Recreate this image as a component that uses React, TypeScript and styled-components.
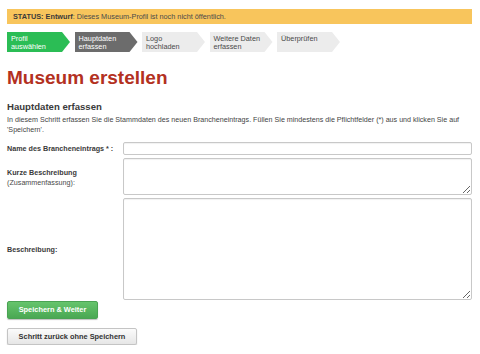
import React from "react";
import styled, { createGlobalStyle } from "styled-components";

const GlobalStyle = createGlobalStyle`
  html, body {
    margin: 0;
    padding: 0;
    background: #ffffff;
  }
  body {
    font-family: "Liberation Sans", Arial, sans-serif;
    color: #333333;
  }
`;

type StepState = "done" | "active" | "todo";

interface Step {
  label: string[];
  state: StepState;
}

const steps: Step[] = [
  { label: ["Profil", "auswählen"], state: "done" },
  { label: ["Hauptdaten", "erfassen"], state: "active" },
  { label: ["Logo", "hochladen"], state: "todo" },
  { label: ["Weitere Daten", "erfassen"], state: "todo" },
  { label: ["Überprüfen"], state: "todo" },
];

export default function App() {
  return (
    <Page>
      <GlobalStyle />
      <StatusBar>
        <strong>STATUS: Entwurf</strong>: Dieses Museum-Profil ist noch nicht öffentlich.
      </StatusBar>

      <Steps>
        {steps.map((step, index) => (
          <StepItem key={index} $state={step.state}>
            {step.label.map((line, i) => (
              <span key={i}>{line}</span>
            ))}
          </StepItem>
        ))}
      </Steps>

      <Title>Museum erstellen</Title>
      <SubTitle>Hauptdaten erfassen</SubTitle>
      <Intro>
        In diesem Schritt erfassen Sie die Stammdaten des neuen Brancheneintrags. Füllen Sie
        mindestens die Pflichtfelder (*) aus und klicken Sie auf 'Speichern'.
      </Intro>

      <Form>
        <FieldRow>
          <Label>Name des Brancheneintrags * :</Label>
          <TextInput type="text" />
        </FieldRow>
        <FieldRow>
          <Label $top>
            Kurze Beschreibung
            <Hint>(Zusammenfassung):</Hint>
          </Label>
          <TextArea $height={37} />
        </FieldRow>
        <FieldRow $center>
          <Label>Beschreibung:</Label>
          <TextArea $height={102} />
        </FieldRow>
      </Form>

      <Actions>
        <PrimaryButton>Speichern &amp; Weiter</PrimaryButton>
        <SecondaryButton>Schritt zurück ohne Speichern</SecondaryButton>
      </Actions>
    </Page>
  );
}

const Page = styled.div`
  padding: 9px 8px 0 7px;
  width: 480px;
  box-sizing: border-box;
`;

const StatusBar = styled.div`
  background: #f8c55c;
  height: 15px;
  line-height: 15px;
  padding: 0 6px;
  font-size: 7.3px;
  color: #4a4a4a;

  strong {
    font-weight: 700;
    color: #3a3a3a;
  }
`;

const Steps = styled.div`
  display: flex;
  gap: 4.5px;
  margin-top: 8px;
`;

const stepColors: Record<StepState, { bg: string; fg: string }> = {
  done: { bg: "#2bbd55", fg: "#ffffff" },
  active: { bg: "#6c6c6c", fg: "#ffffff" },
  todo: { bg: "#ececec", fg: "#4a4a4a" },
};

const StepItem = styled.div<{ $state: StepState }>`
  width: 63px;
  height: 20px;
  box-sizing: border-box;
  padding: 2.5px 10px 0 4px;
  display: flex;
  flex-direction: column;
  background: ${(p) => stepColors[p.$state].bg};
  color: ${(p) => stepColors[p.$state].fg};
  clip-path: polygon(0 0, 55px 0, 100% 50%, 55px 100%, 0 100%);
  font-size: 7.3px;
  line-height: 8.4px;
  white-space: nowrap;
`;

const Title = styled.h1`
  margin: 14px 0 0;
  font-size: 19px;
  line-height: 24px;
  font-weight: 700;
  color: #b3311f;
`;

const SubTitle = styled.h2`
  margin: 11px 0 0;
  font-size: 9.6px;
  line-height: 12px;
  font-weight: 700;
  color: #3a3a3a;
`;

const Intro = styled.p`
  margin: 2px 0 0;
  font-size: 7.15px;
  line-height: 10px;
  color: #444444;
`;

const Form = styled.div`
  margin-top: 7px;
  display: flex;
  flex-direction: column;
  gap: 3px;
`;

const FieldRow = styled.div<{ $center?: boolean }>`
  display: flex;
  align-items: ${(p) => (p.$center ? "center" : "flex-start")};
`;

const Label = styled.label<{ $top?: boolean }>`
  width: 116px;
  flex-shrink: 0;
  display: flex;
  flex-direction: column;
  padding-top: ${(p) => (p.$top ? "10px" : "2px")};
  font-size: 7.2px;
  line-height: 9.5px;
  font-weight: 700;
  color: #3a3a3a;
`;

const Hint = styled.span`
  font-weight: 400;
  color: #4a4a4a;
`;

const fieldBorder = `
  border: 1px solid #c8c8c8;
  border-radius: 2px;
  box-shadow: inset 0 1px 1px rgba(0, 0, 0, 0.06);
  background: #ffffff;
  box-sizing: border-box;
  margin: 0;
  outline: none;
  display: block;
`;

const TextInput = styled.input`
  ${fieldBorder}
  flex: 1;
  height: 13px;
  padding: 0;
`;

const TextArea = styled.textarea<{ $height: number }>`
  ${fieldBorder}
  flex: 1;
  height: ${(p) => p.$height}px;
  resize: vertical;
`;

const Actions = styled.div`
  display: flex;
  flex-direction: column;
  align-items: flex-start;
  gap: 9px;
  margin-top: 1px;
`;

const BaseButton = styled.button`
  height: 17.5px;
  padding: 0;
  border-radius: 2px;
  font-family: "Liberation Sans", Arial, sans-serif;
  font-size: 7.4px;
  font-weight: 700;
  white-space: nowrap;
  cursor: pointer;
  box-shadow: 0 1px 1px rgba(0, 0, 0, 0.25);
`;

const PrimaryButton = styled(BaseButton)`
  width: 91px;
  color: #ffffff;
  border: 1px solid #4aa353;
  background: linear-gradient(#66c46c, #4aa853);
`;

const SecondaryButton = styled(BaseButton)`
  width: 130px;
  color: #333333;
  border: 1px solid #c4c4c4;
  background: linear-gradient(#fbfbfb, #e6e6e6);
`;
